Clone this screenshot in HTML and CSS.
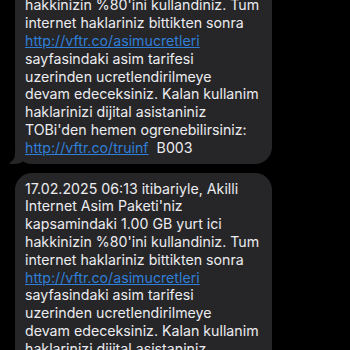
FILE: index.html
```html
<!DOCTYPE html>
<html lang="en">
<head>
    <meta charset="UTF-8">
    <meta name="viewport" content="width=device-width, initial-scale=1.0">
    <title>Mesajlar</title>
    <link rel="stylesheet" href="styles.css">
</head>
<body>
    <div class="thread">
        <div class="bubble tail">
            17.02.2025 06:13 itibariyle, Akilli<br>
            Internet Asim Paketi'niz<br>
            kapsamindaki 1.00 GB yurt ici<br>
            hakkinizin %80'ini kullandiniz. Tum<br>
            internet haklariniz bittikten sonra<br>
            <a href="#" class="link">http://vftr.co/asimucretleri</a><br>
            sayfasindaki asim tarifesi<br>
            uzerinden ucretlendirilmeye<br>
            devam edeceksiniz. Kalan kullanim<br>
            haklarinizi dijital asistaniniz<br>
            TOBi'den hemen ogrenebilirsiniz:<br>
            <a href="#" class="link">http://vftr.co/truinf</a>&nbsp; B003
        </div>
        <div class="bubble tail">
            17.02.2025 06:13 itibariyle, Akilli<br>
            Internet Asim Paketi'niz<br>
            kapsamindaki 1.00 GB yurt ici<br>
            hakkinizin %80'ini kullandiniz. Tum<br>
            internet haklariniz bittikten sonra<br>
            <a href="#" class="link">http://vftr.co/asimucretleri</a><br>
            sayfasindaki asim tarifesi<br>
            uzerinden ucretlendirilmeye<br>
            devam edeceksiniz. Kalan kullanim<br>
            haklarinizi dijital asistaniniz<br>
            TOBi'den hemen ogrenebilirsiniz:<br>
            <a href="#" class="link">http://vftr.co/truinf</a>&nbsp; B003
        </div>
    </div>
</body>
</html>
```

FILE: styles.css
```css
body {
    margin: 0;
    background-color: #000;
    font-family: Inter, "Noto Sans", sans-serif;
    overflow: hidden;
}
.thread {
    display: flex;
    flex-direction: column;
    gap: 9px;
    margin-top: -64px;
    padding-left: 15px;
}
.bubble {
    position: relative;
    width: 257px;
    box-sizing: border-box;
    background-color: #262628;
    color: #ececf0;
    font-size: 14.2px;
    line-height: 17.8px;
    padding: 7px 10px;
    border-radius: 17px;
    white-space: nowrap;
}
.tail::before {
    content: "";
    position: absolute;
    z-index: -1;
    left: -5px;
    bottom: 0;
    width: 20px;
    height: 18px;
    background-color: #262628;
    border-bottom-right-radius: 16px 14px;
}
.tail::after {
    content: "";
    position: absolute;
    z-index: -1;
    left: -10px;
    bottom: 0;
    width: 10px;
    height: 18px;
    background-color: #000;
    border-bottom-right-radius: 10px;
}
.link {
    color: #2f7ed8;
    text-decoration: underline;
}
```
